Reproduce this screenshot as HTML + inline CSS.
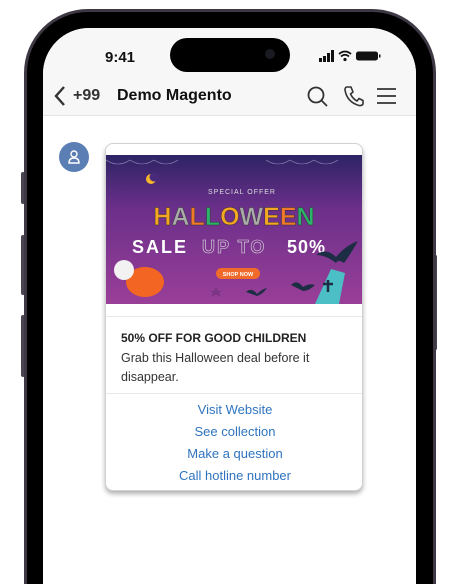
<!DOCTYPE html>
<html style="width:452px;height:584px;overflow:hidden"><head><meta charset="utf-8"><style>
*{margin:0;padding:0;box-sizing:border-box}
body{width:452px;height:584px;background:#fff;position:relative;overflow:hidden;font-family:"Liberation Sans",sans-serif}
.btn{position:absolute;background:#4a4450;border-radius:2px}
.frame{position:absolute;left:24px;top:9px;width:412px;height:575px;border-radius:64px 64px 0 0;background:#3d3843;}
.bezel{position:absolute;left:27px;top:12px;width:406px;height:572px;border-radius:61px 61px 0 0;background:#000}
.screen{position:absolute;left:43px;top:28px;width:373px;height:556px;border-radius:46px 46px 0 0;background:#fff;overflow:hidden}
.head{position:absolute;left:0;top:0;width:373px;height:88px;background:#f7f7f7;border-bottom:1px solid #e4e4e4}
.abs{position:absolute}
.card{position:absolute;left:62px;top:115px;width:258px;height:348px;background:#fff;border:1px solid #d2d2d2;border-radius:8px;box-shadow:0 3px 5px rgba(0,0,0,.3);overflow:hidden}
.lnk{position:absolute;left:0;width:258px;text-align:center;color:#2f74c0;font-size:13px}
</style></head><body>
<div class="btn" style="left:21px;top:172px;width:4px;height:32px"></div>
<div class="btn" style="left:21px;top:235px;width:4px;height:60px"></div>
<div class="btn" style="left:21px;top:315px;width:4px;height:62px"></div>
<div class="btn" style="left:434px;top:255px;width:3px;height:95px"></div>
<div class="frame"></div><div class="bezel"></div>
<div class="screen">
 <div class="head">
  <div class="abs" style="left:62px;top:21px;font-size:15px;font-weight:bold;color:#111">9:41</div>
  <div class="abs" style="left:127px;top:10px;width:120px;height:34px;border-radius:17px;background:#000"></div>
  <div class="abs" style="left:222px;top:21px;width:10px;height:10px;border-radius:5px;background:#1a1a22"></div>
  <svg class="abs" style="left:276px;top:22px" width="70" height="12">
   <rect x="0" y="8" width="3" height="4" fill="#111"/><rect x="4" y="6" width="3" height="6" fill="#111"/><rect x="8" y="3" width="3" height="9" fill="#111"/><rect x="12" y="0" width="3" height="12" fill="#111"/>
   <path d="M20 4 Q26 -1 32 4 M22 6.5 Q26 3 30 6.5" stroke="#111" stroke-width="1.8" fill="none"/><circle cx="26" cy="9.5" r="1.6" fill="#111"/>
   <rect x="37" y="1.5" width="22" height="9" rx="2.5" fill="#111"/><rect x="60" y="4.5" width="1.5" height="3" fill="#111"/>
  </svg>
  <svg class="abs" style="left:10px;top:57px" width="14" height="22"><path d="M11 2 L3 11 L11 20" stroke="#333" stroke-width="2.4" fill="none"/></svg>
  <div class="abs" style="left:30px;top:59px;font-size:16px;font-weight:bold;color:#333">+99</div>
  <div class="abs" style="left:74px;top:59px;font-size:16px;font-weight:bold;color:#111">Demo Magento</div>
  <svg class="abs" style="left:264px;top:58px" width="22" height="22"><circle cx="9" cy="9" r="7.5" stroke="#333" stroke-width="1.8" fill="none"/><path d="M14.5 14.5 L20 20" stroke="#333" stroke-width="1.8"/></svg>
  <svg class="abs" style="left:300px;top:57px" width="22" height="22"><path d="M4 2 L8 2 L10 7 L7.5 9 Q10 14 14 16 L16 13.5 L20 15.5 L20 19 Q19 21 16 20.5 Q4 17 2 5 Q2 2 4 2Z" stroke="#333" stroke-width="1.6" fill="none" stroke-linejoin="round"/></svg>
  <svg class="abs" style="left:333px;top:59px" width="22" height="18"><path d="M1 2H20M1 9H20M1 16H20" stroke="#333" stroke-width="1.8"/></svg>
 </div>
 <div class="abs" style="left:16px;top:114px;width:30px;height:30px;border-radius:15px;background:#5b7fb5"></div>
 <svg class="abs" style="left:24px;top:121px" width="14" height="16"><circle cx="7" cy="5" r="3" stroke="#fff" stroke-width="1.4" fill="none"/><path d="M2 14 Q2 9 7 9 Q12 9 12 14Z" stroke="#fff" stroke-width="1.4" fill="none"/></svg>
 <div class="card">
  <svg class="abs" style="left:0;top:11px" width="258" height="149">
   <defs><linearGradient id="g" x1="0" y1="0" x2="0" y2="1"><stop offset="0" stop-color="#2d2464"/><stop offset=".35" stop-color="#6a2f8a"/><stop offset="1" stop-color="#9a3f98"/></linearGradient></defs>
   <rect width="258" height="149" fill="url(#g)"/>
   <path d="M0 5 q12 8 24 0 q12 8 24 0 q12 8 24 0 M160 5 q12 8 24 0 q12 8 24 0 q12 8 24 0" stroke="#9a8ac0" stroke-width=".6" fill="none"/>
   <path d="M110 132 l5 10 l-11 -6 h12 l-11 6z" fill="#7a3585"/>
   <circle cx="45" cy="24" r="5" fill="#f5b62b"/><circle cx="48" cy="22" r="4.5" fill="#4a2a7a"/>
   <text x="136" y="39" font-size="7" fill="#ddd" text-anchor="middle" font-family="Liberation Sans" letter-spacing="1">SPECIAL OFFER</text>
   <text x="128" y="70" font-size="25" font-weight="bold" text-anchor="middle" font-family="Liberation Sans" stroke="#333" stroke-width=".5"><tspan fill="#f5a623">H</tspan><tspan fill="#aaa">A</tspan><tspan fill="#f07a2a">L</tspan><tspan fill="#2bb36a">L</tspan><tspan fill="#f5a623">O</tspan><tspan fill="#aaa">W</tspan><tspan fill="#f5a623">E</tspan><tspan fill="#f07a2a">E</tspan><tspan fill="#2bb36a">N</tspan></text>
   <text x="26" y="98" font-size="18" font-weight="bold" fill="#fff" font-family="Liberation Sans" letter-spacing="2">SALE</text>
   <text x="96" y="98" font-size="18" font-weight="bold" fill="none" stroke="#ddd" stroke-width=".6" font-family="Liberation Sans" letter-spacing="2">UP TO</text>
   <text x="181" y="98" font-size="18" font-weight="bold" fill="#fff" font-family="Liberation Sans" letter-spacing="1">50%</text>
   <rect x="110" y="113" width="44" height="11" rx="5.5" fill="#f06a2a"/>
   <text x="132" y="121" font-size="5.5" font-weight="bold" fill="#fff" text-anchor="middle" font-family="Liberation Sans">SHOP NOW</text>
   <ellipse cx="39" cy="127" rx="19" ry="15" fill="#f26522"/>
   <circle cx="18" cy="115" r="10" fill="#f2f2f2"/>
   <path d="M225 114 l14 4 l-6 31 h-24z" fill="#4bbfc5"/>
   <path d="M222 125v12M217 129h10" stroke="#1d2d44" stroke-width="2.5"/>
   <path d="M210 100 q10 -8 20 2 q10 -12 22 -16 q-8 14 -14 22 q-6 -4 -8 0 q-10 -8 -20 -8z" fill="#1d2d44"/>
   <path d="M185 130 q6 -6 12 2 q6 -4 12 -2 q-6 6 -12 6z" fill="#1d2d44"/>
   <path d="M140 137 q6 -5 11 2 q5 -5 10 -6 q-4 6 -10 8z" fill="#1d2d44"/>
  </svg>
  <div class="abs" style="left:0;top:172px;width:258px;border-top:1px solid #e8e8e8"></div>
  <div class="abs" style="left:15px;top:187px;font-size:12px;font-weight:bold;color:#222">50% OFF FOR GOOD CHILDREN</div>
  <div class="abs" style="left:15px;top:205px;width:230px;font-size:12.5px;line-height:19px;color:#333">Grab this Halloween deal before it disappear.</div>
  <div class="abs" style="left:0;top:249px;width:258px;border-top:1px solid #e8e8e8"></div>
  <div class="lnk" style="top:258px">Visit Website</div>
  <div class="lnk" style="top:280px">See collection</div>
  <div class="lnk" style="top:302px">Make a question</div>
  <div class="lnk" style="top:324px">Call hotline number</div>
 </div>
</div>
</body></html>
